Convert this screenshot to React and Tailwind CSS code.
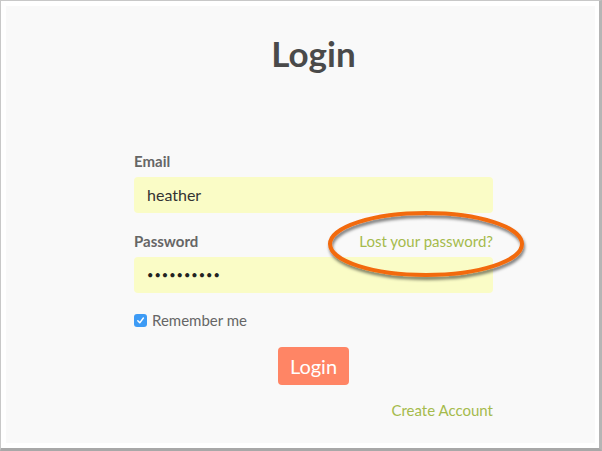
export default function App() {
  return (
    <div className="w-[602px] h-[451px] bg-white relative font-['Lato',sans-serif]">
      <div className="absolute inset-0 border border-[#c8c8c8] border-r-[3px] border-b-[3px] border-r-[#b5b5b5] border-b-[#a8a8a8]" />
      <div className="absolute left-[6px] top-[6px] w-[589px] h-[437px] bg-[#f9f9f9]">
        <div className="relative w-[359px] ml-[128px]">
          <h1 className="text-[35px] leading-none font-bold text-[#4a4a4a] text-center pt-[30px]">Login</h1>
          <label className="block mt-[81px] text-[15px] leading-[18px] font-bold text-[#666]">Email</label>
          <div className="mt-[7px] h-[36px] rounded-[4px] bg-[#fafcc6] flex items-center px-[13px] text-[16px] text-[#333]">heather</div>
          <div className="flex justify-between items-end mt-[19px] h-[18px]">
            <span className="text-[15px] leading-[18px] font-bold text-[#666]">Password</span>
            <span className="text-[15px] leading-[18px] text-[#a5bb4c]">Lost your password?</span>
          </div>
          <div className="mt-[7px] h-[36px] rounded-[4px] bg-[#fafcc6] flex items-center px-[13px] text-[11px] tracking-[1px] text-[#222]">••••••••••</div>
          <div className="flex items-center gap-[5px] mt-[16px]">
            <div className="w-[13px] h-[13px] rounded-[3px] bg-[#3d9bf5] flex items-center justify-center">
              <svg width="9" height="9" viewBox="0 0 10 10"><path d="M2 5.2 L4.2 7.6 L8.2 2.2" stroke="white" strokeWidth="1.6" fill="none" strokeLinecap="round" strokeLinejoin="round" /></svg>
            </div>
            <span className="text-[15px] text-[#666]">Remember me</span>
          </div>
          <div className="flex justify-center mt-[15px]">
            <button className="h-[38px] px-[12px] rounded-[4px] bg-[#ff8565] text-white text-[20px]">Login</button>
          </div>
          <div className="flex justify-end mt-[14px]">
            <span className="text-[15px] text-[#a5bb4c]">Create Account</span>
          </div>
          <svg className="absolute left-[191px] top-[203px] pointer-events-none" width="206" height="76" viewBox="0 0 206 76">
            <defs>
              <filter id="sh" x="-10%" y="-20%" width="120%" height="150%">
                <feDropShadow dx="1" dy="3" stdDeviation="1.5" floodColor="#000" floodOpacity="0.5" />
              </filter>
            </defs>
            <ellipse cx="101" cy="35" rx="96" ry="31" fill="none" stroke="#f26a10" strokeWidth="4" filter="url(#sh)" />
          </svg>
        </div>
      </div>
    </div>
  );
}
